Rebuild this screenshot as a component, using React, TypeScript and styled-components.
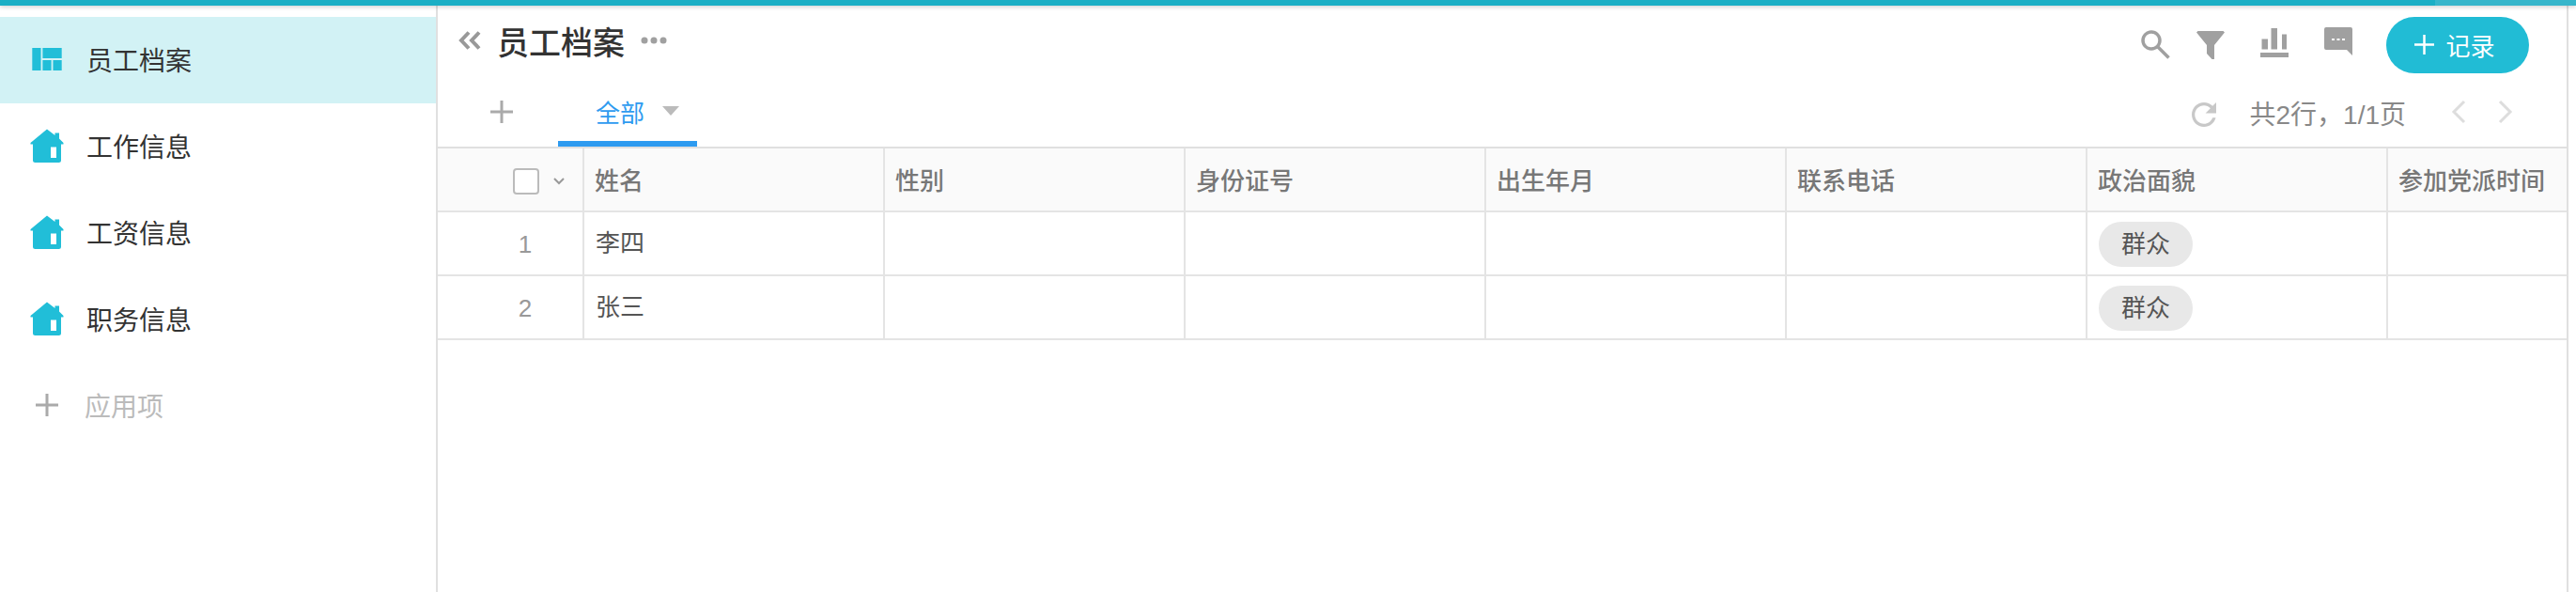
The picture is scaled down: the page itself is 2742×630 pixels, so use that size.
import React from "react";
import styled, { createGlobalStyle } from "styled-components";

const Global = createGlobalStyle`
  * { box-sizing: border-box; }
  html, body { margin: 0; padding: 0; background: #fff; }
  body { font-family: "Liberation Sans", "Noto Sans CJK SC", sans-serif; overflow: hidden; }
`;

const Page = styled.div`
  width: 2742px;
  height: 630px;
  display: flex;
  flex-direction: column;
  overflow: hidden;
`;
const TopBar = styled.div`
  height: 6px;
  flex: none;
  display: flex;
  box-shadow: 0 1px 5px rgba(0, 0, 0, 0.22);
  position: relative;
  z-index: 2;
`;
const TopSegment = styled.div<{ $light?: boolean }>`
  height: 6px;
  flex: ${(p) => (p.$light ? "0 0 150px" : "1")};
  background: ${(p) => (p.$light ? "#37b6cb" : "#1bafc5")};
`;
const Body = styled.div`
  flex: 1;
  display: flex;
  padding-right: 8px;
  min-height: 0;
`;
const Sidebar = styled.nav`
  width: 466px;
  flex: none;
  border-right: 2px solid #e0e0e0;
  padding-top: 12px;
`;
const NavItem = styled.div<{ $active?: boolean }>`
  height: 92px;
  display: flex;
  align-items: center;
  padding: 0 0 3px 32px;
  gap: 24px;
  font-size: 28px;
  color: #333;
  background: ${(p) => (p.$active ? "#d2f2f5" : "transparent")};
`;
const NavIconBox = styled.span`
  width: 36px;
  height: 36px;
  display: flex;
  align-items: center;
  justify-content: center;
  flex: none;
`;
const AddItem = styled(NavItem)`
  color: #bbb;
  gap: 22px;
`;
const Main = styled.main`
  flex: 1;
  min-width: 0;
  border-right: 2px solid #e0e0e0;
  display: flex;
  flex-direction: column;
`;
const TitleRow = styled.div`
  height: 84px;
  flex: none;
  display: flex;
  align-items: flex-start;
  justify-content: space-between;
  padding: 12px 40px 0 22px;
`;
const TitleLeft = styled.div`
  display: flex;
  align-items: center;
  height: 50px;
`;
const Title = styled.h1`
  margin: 0 17px 0 17px;
  font-size: 34px;
  font-weight: 500;
  color: #333;
`;
const Tools = styled.div`
  display: flex;
  align-items: center;
  height: 60px;
`;
const ToolIcon = styled.span<{ $gap: number; $lift: number }>`
  width: 32px;
  height: 32px;
  margin-right: ${(p) => p.$gap}px;
  margin-bottom: ${(p) => p.$lift * 2}px;
  display: flex;
  align-items: center;
  justify-content: center;
`;
const AddButton = styled.button`
  width: 152px;
  height: 60px;
  border: 0;
  border-radius: 30px;
  background: #21bcd5;
  color: #fff;
  font: inherit;
  font-size: 26px;
  display: flex;
  align-items: center;
  justify-content: center;
  gap: 12px;
  padding: 0 6px 2px 0;
`;
const TabRow = styled.div`
  height: 66px;
  flex: none;
  display: flex;
  align-items: stretch;
  justify-content: space-between;
  padding: 0 57px 0 56px;
`;
const TabLeft = styled.div`
  display: flex;
  align-items: stretch;
`;
const TabAdd = styled.span`
  width: 24px;
  height: 24px;
  margin-top: 17px;
  margin-right: 48px;
  display: flex;
`;
const Tab = styled.div`
  width: 148px;
  border-bottom: 6px solid #2e9bf0;
  display: flex;
  align-items: center;
  padding-left: 40px;
  padding-bottom: 4px;
  gap: 20px;
  font-size: 26px;
  color: #2e9bf0;
`;
const Caret = styled.span`
  width: 0;
  height: 0;
  border-left: 9px solid transparent;
  border-right: 9px solid transparent;
  border-top: 10px solid #bbb;
  margin-left: -1px;
`;
const Pager = styled.div`
  display: flex;
  align-items: center;
  padding-bottom: 6px;
  font-size: 28px;
  color: #888;
`;
const RefreshIcon = styled.span`
  display: flex;
  margin: 4px 2px 0 0;
`;
const PagerText = styled.span`
  margin: 0 48px 0 34px;
`;
const PagerArrow = styled.span`
  display: flex;
  margin: 0 34px 2px 0;
  &:last-child { margin-right: 0; }
`;
const Row = styled.div<{ $head?: boolean }>`
  height: 68px;
  display: flex;
  border-bottom: 2px solid #e4e4e4;
  background: ${(p) => (p.$head ? "#fafafa" : "#fff")};
  color: ${(p) => (p.$head ? "#777" : "#555")};
  font-size: 26px;
  font-weight: ${(p) => (p.$head ? 500 : 400)};
`;
const HeadRow = styled(Row)`
  border-top: 2px solid #e0e0e0;
  height: 70px;
`;
const IndexCell = styled.div`
  width: 156px;
  flex: none;
  border-right: 2px solid #e4e4e4;
  display: flex;
  align-items: center;
  justify-content: flex-start;
  padding-left: 80px;
  color: #999;
  font-size: 26px;
  font-weight: 400;
`;
const IndexNumber = styled.span`
  width: 26px;
  margin-top: 2px;
  text-align: center;
`;
const Check = styled.span`
  width: 28px;
  height: 28px;
  margin-top: 4px;
  border: 2px solid #bbb;
  border-radius: 4px;
  background: #fff;
  flex: none;
`;
const Chevron = styled.span`
  display: flex;
  margin: 4px 0 0 15px;
`;
const Cell = styled.div<{ $last?: boolean }>`
  width: ${(p) => (p.$last ? "auto" : "320px")};
  flex: ${(p) => (p.$last ? "1" : "none")};
  min-width: 0;
  border-right: ${(p) => (p.$last ? "0" : "2px solid #e4e4e4")};
  display: flex;
  align-items: center;
  padding: 0 0 2px 11px;
  white-space: nowrap;
`;
const BodyCell = styled(Cell)`
  padding: 0 0 6px 12px;
`;
const TagCell = styled(Cell)`
  padding: 2px 0 0 12px;
`;
const Tag = styled.span`
  width: 100px;
  height: 48px;
  padding-bottom: 6px;
  border-radius: 24px;
  background: #e8e8e8;
  color: #555;
  display: flex;
  align-items: center;
  justify-content: center;
`;

const House = () => (
  <svg width="36" height="36" viewBox="0 0 36 36">
    <path
      fill="#21bed8"
      fillRule="evenodd"
      d="M18 0.5 L26.5 7 V4.5 H31 V10.5 L35.5 15 V16.5 H33 V33.5 Q33 36 30.5 36 H5.5 Q3 36 3 33.5 V16.5 H0.5 V15 Z M22 19.5 V31 H28 V19.5 Z"
    />
  </svg>
);
const Plus = ({ size = 24, color = "#aaa", w = 3 }: { size?: number; color?: string; w?: number }) => (
  <svg width={size} height={size} viewBox={`0 0 ${size} ${size}`}>
    <path stroke={color} strokeWidth={w} d={`M${size / 2} 0V${size}M0 ${size / 2}H${size}`} />
  </svg>
);

const headers = ["姓名", "性别", "身份证号", "出生年月", "联系电话", "政治面貌", "参加党派时间"];
const rows = [
  { n: 1, name: "李四" },
  { n: 2, name: "张三" },
];

export default function App() {
  return (
    <Page>
      <Global />
      <TopBar>
        <TopSegment />
        <TopSegment $light />
      </TopBar>
      <Body>
        <Sidebar>
          <NavItem $active>
            <NavIconBox>
              <svg width="32" height="24" viewBox="4 5 17 13">
                <path fill="#21bed8" d="M10 18h5v-6h-5v6zm-6 0h5V5H4v13zm12 0h5v-6h-5v6zM10 5v6h11V5H10z" />
              </svg>
            </NavIconBox>
            员工档案
          </NavItem>
          {["工作信息", "工资信息", "职务信息"].map((t) => (
            <NavItem key={t}>
              <NavIconBox>
                <House />
              </NavIconBox>
              {t}
            </NavItem>
          ))}
          <AddItem>
            <NavIconBox>
              <Plus />
            </NavIconBox>
            应用项
          </AddItem>
        </Sidebar>
        <Main>
          <TitleRow>
            <TitleLeft>
              <svg width="24" height="20" viewBox="0 0 24 20">
                <path fill="none" stroke="#999" strokeWidth="4" d="M11 1.5 L3 10 L11 18.5 M22 1.5 L14 10 L22 18.5" />
              </svg>
              <Title>员工档案</Title>
              <svg width="28" height="8" viewBox="0 0 28 8">
                <circle cx="4" cy="4" r="3.5" fill="#a0a0a0" />
                <circle cx="14" cy="4" r="3.5" fill="#a0a0a0" />
                <circle cx="24" cy="4" r="3.5" fill="#a0a0a0" />
              </svg>
            </TitleLeft>
            <Tools>
              <ToolIcon $gap={27} $lift={1}>
                <svg width="31" height="31" viewBox="0 0 31 31">
                  <circle cx="11" cy="11" r="9" fill="none" stroke="#a0a0a0" strokeWidth="3.5" />
                  <path stroke="#a0a0a0" strokeWidth="3.5" d="M17.5 17.5 L29.5 29.5" />
                </svg>
              </ToolIcon>
              <ToolIcon $gap={36} $lift={0}>
                <svg width="30" height="30" viewBox="0 0 30 30">
                  <path fill="#a0a0a0" d="M0 1.5 L1.5 0 H28.5 L30 1.5 L19 15 V30 H16.5 L11 24 V15 Z" />
                </svg>
              </ToolIcon>
              <ToolIcon $gap={36} $lift={3}>
                <svg width="30" height="31" viewBox="0 0 30 31">
                  <path fill="#a0a0a0" d="M1.5 11.5h6.5v11h-6.5zM11.5 0h6.5v22.5h-6.5zM23 6.5h5v16h-5zM0 26h30v5H0z" />
                </svg>
              </ToolIcon>
              <ToolIcon $gap={35} $lift={4}>
                <svg width="30" height="30" viewBox="0 0 30 30">
                  <path
                    fill="#a0a0a0"
                    fillRule="evenodd"
                    d="M2 0H28Q30 0 30 2V30L24 24H2Q0 24 0 22V2Q0 0 2 0ZM8 12v2h3v-2zM13.5 12v2h3v-2zM19 12v2h3v-2z"
                  />
                </svg>
              </ToolIcon>
              <AddButton>
                <Plus size={21} color="#fff" w={2.5} />
                记录
              </AddButton>
            </Tools>
          </TitleRow>
          <TabRow>
            <TabLeft>
              <TabAdd>
                <Plus />
              </TabAdd>
              <Tab>
                全部
                <Caret />
              </Tab>
            </TabLeft>
            <Pager>
              <RefreshIcon>
                <svg width="26" height="26" viewBox="4 4 16 16">
                  <path
                    fill="#c8c8c8"
                    d="M17.65 6.35C16.2 4.9 14.21 4 12 4c-4.42 0-7.99 3.58-7.99 8s3.57 8 7.99 8c3.73 0 6.84-2.55 7.73-6h-2.08c-.82 2.33-3.04 4-5.65 4-3.31 0-6-2.69-6-6s2.69-6 6-6c1.66 0 3.14.69 4.22 1.78L13 11h7V4l-2.35 2.35z"
                  />
                </svg>
              </RefreshIcon>
              <PagerText>共2行，1/1页</PagerText>
              <PagerArrow>
                <svg width="16" height="26" viewBox="0 0 16 26">
                  <path fill="none" stroke="#ddd" strokeWidth="3" d="M14 2 L3 13 L14 24" />
                </svg>
              </PagerArrow>
              <PagerArrow>
                <svg width="16" height="26" viewBox="0 0 16 26">
                  <path fill="none" stroke="#ddd" strokeWidth="3" d="M2 2 L13 13 L2 24" />
                </svg>
              </PagerArrow>
            </Pager>
          </TabRow>
          <HeadRow $head>
            <IndexCell>
              <Check />
              <Chevron>
                <svg width="12" height="8" viewBox="0 0 12 8">
                  <path fill="none" stroke="#999" strokeWidth="2" d="M1 1 L6 6 L11 1" />
                </svg>
              </Chevron>
            </IndexCell>
            {headers.map((h, i) => (
              <Cell key={h} $last={i === headers.length - 1}>
                {h}
              </Cell>
            ))}
          </HeadRow>
          {rows.map((r) => (
            <Row key={r.n}>
              <IndexCell>
                <IndexNumber>{r.n}</IndexNumber>
              </IndexCell>
              <BodyCell>{r.name}</BodyCell>
              <BodyCell />
              <BodyCell />
              <BodyCell />
              <BodyCell />
              <TagCell>
                <Tag>群众</Tag>
              </TagCell>
              <BodyCell $last />
            </Row>
          ))}
        </Main>
      </Body>
    </Page>
  );
}
